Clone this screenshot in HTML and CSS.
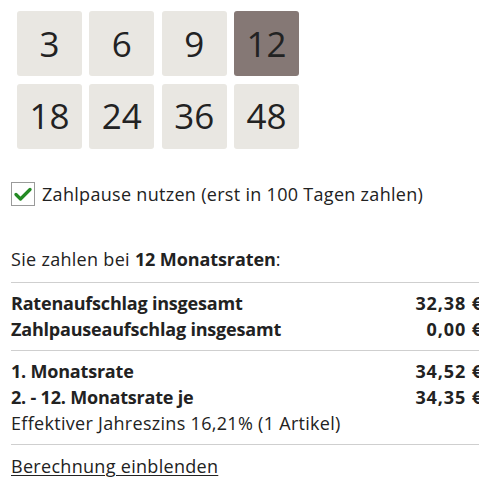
FILE: index.html
```html
<!DOCTYPE html>
<html lang="de">
<head>
<meta charset="utf-8">
<link rel="stylesheet" href="styles.css">
</head>
<body>
<div class="page">
  <div class="tiles">
    <div class="tile">3</div>
    <div class="tile">6</div>
    <div class="tile">9</div>
    <div class="tile selected">12</div>
    <div class="tile">18</div>
    <div class="tile">24</div>
    <div class="tile">36</div>
    <div class="tile">48</div>
  </div>
  <label class="check-row">
    <span class="checkbox"><svg width="18" height="14" viewBox="0 0 18 14"><path d="M2 7.5 L6.5 12 L16 2.5" fill="none" stroke="#238a23" stroke-width="3.2" stroke-linecap="round" stroke-linejoin="round"/></svg></span>
    <span class="check-label">Zahlpause nutzen (erst in 100 Tagen zahlen)</span>
  </label>
  <p class="intro">Sie zahlen bei <b>12 Monatsraten</b>:</p>
  <div class="summary">
    <div class="group">
      <div class="row bold"><span>Ratenaufschlag insgesamt</span><span class="value">32,38 €</span></div>
      <div class="row bold"><span>Zahlpauseaufschlag insgesamt</span><span class="value">0,00 €</span></div>
    </div>
    <div class="group">
      <div class="row bold"><span>1. Monatsrate</span><span class="value">34,52 €</span></div>
      <div class="row bold"><span>2. - 12. Monatsrate je</span><span class="value">34,35 €</span></div>
      <div class="row"><span>Effektiver Jahreszins 16,21% (1 Artikel)</span></div>
    </div>
    <div class="group link-group">
      <a class="link" href="#">Berechnung einblenden</a>
    </div>
  </div>
</div>
</body>
</html>
```
FILE: styles.css
```css
html, body {
  margin: 0;
  padding: 0;
  background: #fff;
  overflow: hidden;
}
body {
  font-family: "Open Sans", "Noto Sans", sans-serif;
  color: #222;
  width: 479px;
  height: 480px;
  letter-spacing: 0.3px;
}
.page {
  width: 472px;
  padding-left: 11px;
}
.tiles {
  display: grid;
  grid-template-columns: repeat(4, 65px);
  grid-auto-rows: 65px;
  column-gap: 7.33px;
  row-gap: 7.5px;
  padding: 11px 0 0 6px;
  letter-spacing: 0;
}
.tile {
  background: #e9e7e2;
  border-radius: 3px;
  display: flex;
  align-items: center;
  justify-content: center;
  font-size: 35px;
  color: #222;
  padding-bottom: 1px;
  box-sizing: border-box;
}
.tile.selected {
  background: #857875;
}
.check-row {
  display: flex;
  align-items: center;
  gap: 7px;
  margin-top: 33px;
  height: 24px;
}
.checkbox {
  width: 24px;
  height: 24px;
  box-sizing: border-box;
  border: 1px solid #9a9a9a;
  display: flex;
  align-items: center;
  justify-content: center;
  background: #fff;
}
.check-label {
  font-size: 18px;
}
.intro {
  margin: 40px 0 0;
  font-size: 18px;
  line-height: 26px;
}
.intro b { font-weight: 700; letter-spacing: -0.1px; }
.summary {
  margin-top: 10px;
}
.group {
  border-top: 1.5px solid #cfcfcf;
  padding: 7px 0 8px;
}
.row {
  display: flex;
  justify-content: space-between;
  font-size: 18px;
  line-height: 26px;
}
.row.bold {
  font-weight: 700;
  letter-spacing: -0.2px;
}
.row .value {
  letter-spacing: 0.9px;
}
.link-group {
  padding-top: 8px;
}
.link {
  color: #222;
  font-size: 18px;
  line-height: 26px;
  text-decoration: underline;
  text-underline-offset: 2px;
  text-decoration-thickness: 1px;
}
```
